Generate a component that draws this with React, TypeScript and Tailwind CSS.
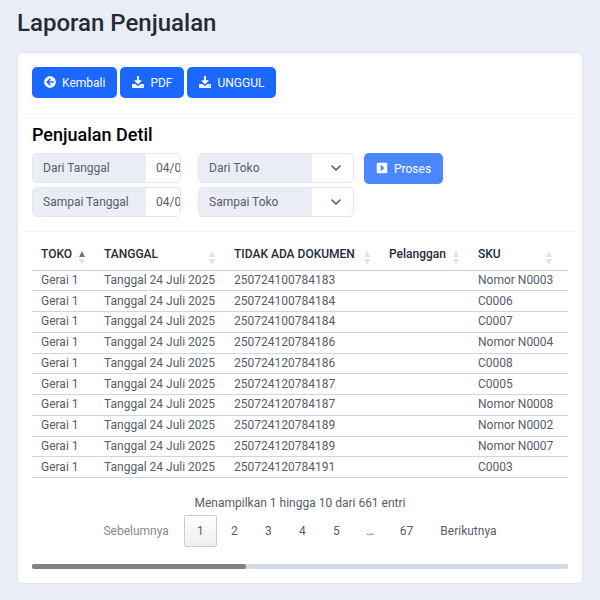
import { FaArrowCircleLeft, FaCaretSquareRight } from 'react-icons/fa';

const rows = [
  { doc: '250724100784183', sku: 'Nomor N0003' },
  { doc: '250724100784184', sku: 'C0006' },
  { doc: '250724100784184', sku: 'C0007' },
  { doc: '250724120784186', sku: 'Nomor N0004' },
  { doc: '250724120784186', sku: 'C0008' },
  { doc: '250724120784187', sku: 'C0005' },
  { doc: '250724120784187', sku: 'Nomor N0008' },
  { doc: '250724120784189', sku: 'Nomor N0002' },
  { doc: '250724120784189', sku: 'Nomor N0007' },
  { doc: '250724120784191', sku: 'C0003' },
];

const columns = [
  { label: 'TOKO', width: 'w-[63px]', sorted: true },
  { label: 'TANGGAL', width: 'w-[130px]' },
  { label: 'TIDAK ADA DOKUMEN', width: 'w-[155px]' },
  { label: 'Pelanggan', width: 'w-[89px]' },
  { label: 'SKU', width: 'pr-1.5' },
];

const pages = ['1', '2', '3', '4', '5', '…', '67'];

const actionButton =
  'flex h-[31px] items-center gap-1.5 rounded-[5px] px-3 text-white';

function DownloadIcon() {
  return (
    <svg viewBox="0 0 24 24" className="mb-0.5 size-3 shrink-0" fill="currentColor" aria-hidden="true">
      <path d="M10.2 0h3.6v8.6h4.4c.8 0 1.1.9.6 1.4l-6 6a1.1 1.1 0 0 1-1.6 0l-6-6c-.5-.5-.2-1.4.6-1.4h4.4z" />
      <path
        fillRule="evenodd"
        d="M1.6 16h5.2l2.8 2.6a3.6 3.6 0 0 0 4.8 0l2.8-2.6h5.2c.9 0 1.6.7 1.6 1.6v4.8c0 .9-.7 1.6-1.6 1.6H1.6C.7 24 0 23.3 0 22.4v-4.8C0 16.7.7 16 1.6 16zM19 19.2V21h2v-1.8z"
      />
    </svg>
  );
}

function SortArrows({ sorted }: { sorted?: boolean }) {
  return (
    <svg viewBox="0 0 6 14" className="mt-2 h-3.5 w-1.5 shrink-0" aria-hidden="true">
      <path d="M0 6L3 0L6 6Z" fill={sorted ? '#6f7480' : '#e0e2e4'} />
      <path d="M0 8L3 14L6 8Z" fill="#e0e2e4" />
    </svg>
  );
}

function DateField({ id, label }: { id: string; label: string }) {
  return (
    <div className="flex h-[30px] w-[149px] overflow-hidden rounded-[5px] border border-[#e2e6ef]">
      <label htmlFor={id} className="flex w-[113px] shrink-0 items-center bg-[#eaedf6] px-2.5">
        {label}
      </label>
      <input id={id} defaultValue="04/08/2025" className="w-full min-w-0 pl-2.5 outline-none" />
    </div>
  );
}

function StoreField({ id, label }: { id: string; label: string }) {
  return (
    <div className="flex h-[30px] w-[156px] overflow-hidden rounded-[5px] border border-[#e2e6ef]">
      <label htmlFor={id} className="flex w-[113px] shrink-0 items-center bg-[#eaedf6] px-2.5">
        {label}
      </label>
      <div className="relative flex-1">
        <select id={id} className="h-full w-full appearance-none outline-none">
          <option value=""></option>
        </select>
        <svg
          viewBox="0 0 10 6"
          className="pointer-events-none absolute top-[11px] right-3 h-1.5 w-2.5"
          fill="none"
          stroke="#4a5468"
          strokeWidth="1.5"
          strokeLinecap="round"
          strokeLinejoin="round"
          aria-hidden="true"
        >
          <path d="M1 1L5 5L9 1" />
        </svg>
      </div>
    </div>
  );
}

export default function App() {
  return (
    <div className="min-h-screen bg-[#eaedf6] px-[17px] pt-[9px] pb-4 font-['Roboto',sans-serif] text-xs text-[#575d69]">
      <h1 className="text-2xl leading-7 font-medium text-[#242b38]">Laporan Penjualan</h1>

      <main className="mt-[15px] rounded-md border border-[#e1e5ee] bg-white">
        {/* Actions */}
        <div className="mx-1.5 flex gap-[3px] border-b border-[#f4f5f7] px-2 pt-3.5 pb-4">
          <button className={`${actionButton} bg-[#1a68ff]`}>
            <FaArrowCircleLeft className="mb-0.5 size-3" />
            Kembali
          </button>
          <button className={`${actionButton} bg-[#1a68ff]`}>
            <DownloadIcon />
            PDF
          </button>
          <button className={`${actionButton} bg-[#1a68ff]`}>
            <DownloadIcon />
            UNGGUL
          </button>
        </div>

        {/* Filters */}
        <section className="mx-1.5 border-b border-[#f4f5f7] px-2 pt-2 pb-3.5">
          <h2 className="text-lg leading-6 font-medium text-black">Penjualan Detil</h2>
          <div className="mt-1.5 flex items-start">
            <div className="flex flex-col gap-1">
              <DateField id="from-date" label="Dari Tanggal" />
              <DateField id="to-date" label="Sampai Tanggal" />
            </div>
            <div className="ml-[17px] flex flex-col gap-1">
              <StoreField id="from-store" label="Dari Toko" />
              <StoreField id="to-store" label="Sampai Toko" />
            </div>
            <button className={`${actionButton} ml-2.5 bg-[#4a87ff]`}>
              <FaCaretSquareRight className="mb-0.5 size-3" />
              Proses
            </button>
          </div>
        </section>

        {/* Report table */}
        <section className="px-3.5 pt-1.5 pb-3.5">
          <table className="h-[240px] w-full table-fixed border-collapse border-b border-[#aeb0b3]">
            <thead>
              <tr className="h-8 border-b border-[#c9cbce]">
                {columns.map((col) => (
                  <th key={col.label} className={`${col.width} pl-[9px] text-left font-medium text-[#242b38]`}>
                    <div className="flex items-center justify-between pr-2.5 whitespace-nowrap">
                      {col.label}
                      <SortArrows sorted={col.sorted} />
                    </div>
                  </th>
                ))}
              </tr>
            </thead>
            <tbody>
              {rows.map((row, i) => (
                <tr key={i} className="border-b border-[#d3d5d8] leading-[19px] whitespace-nowrap">
                  <td className="pl-[9px]">Gerai 1</td>
                  <td className="pl-[9px]">Tanggal 24 Juli 2025</td>
                  <td className="pl-[9px]">{row.doc}</td>
                  <td></td>
                  <td className="pl-[9px]">{row.sku}</td>
                </tr>
              ))}
            </tbody>
          </table>

          <p className="mt-[15px] text-center leading-5">Menampilkan 1 hingga 10 dari 661 entri</p>

          <nav className="mt-0.5 flex justify-center gap-px">
            <button className="h-8 px-3.5 text-[#858992]">Sebelumnya</button>
            {pages.map((page) => (
              <button
                key={page}
                className={`h-8 min-w-[33px] px-3 ${
                  page === '1' ? 'rounded-[2px] border border-[#cccccc] bg-linear-to-b from-white to-[#eeeeee]' : ''
                }`}
              >
                {page}
              </button>
            ))}
            <button className="h-8 px-3.5">Berikutnya</button>
          </nav>

          <div className="mt-[17px] h-[5px] rounded-xs bg-[#d3dae7]">
            <div className="h-full w-[40%] rounded-xs bg-[#828282]" />
          </div>
        </section>
      </main>
    </div>
  );
}
